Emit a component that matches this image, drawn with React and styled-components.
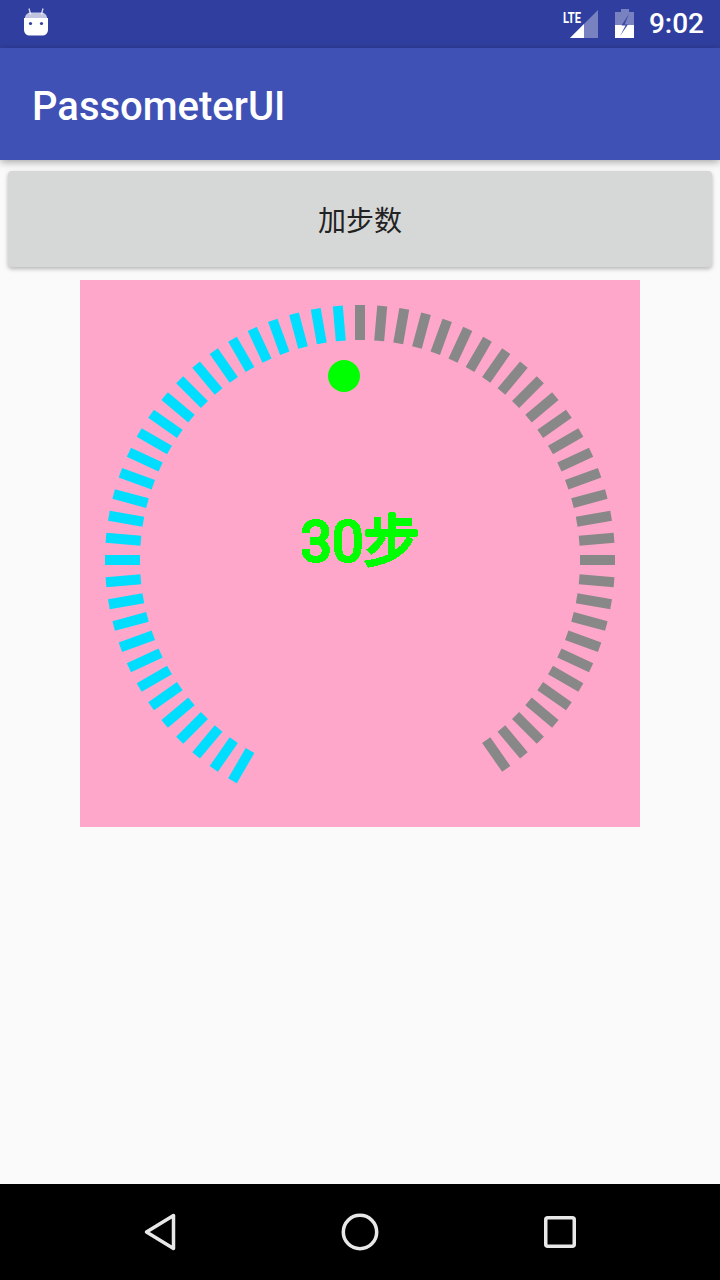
import React from 'react';
import styled, { createGlobalStyle } from 'styled-components';

const GlobalStyle = createGlobalStyle`
  html, body {
    margin: 0;
    padding: 0;
    background: #fafafa;
  }
`;

const Screen = styled.div`
  width: 720px;
  height: 1280px;
  display: flex;
  flex-direction: column;
  overflow: hidden;
  background: #fafafa;
  font-family: Roboto, "Noto Sans CJK SC", sans-serif;
`;

const StatusBar = styled.div`
  height: 48px;
  flex: none;
  display: flex;
  align-items: center;
  padding: 0 16px 0 24px;
  background: #303f9f;
  color: #fff;
`;

const RobotIcon = styled.svg`
  display: block;
  margin-bottom: 4px;
`;

const StatusIcons = styled.div`
  margin-left: auto;
  display: flex;
  align-items: center;
  gap: 15px;
`;

const Clock = styled.span`
  font-size: 28px;
  font-weight: 500;
  line-height: 48px;
`;

const AppBar = styled.header`
  height: 112px;
  flex: none;
  display: flex;
  align-items: center;
  padding: 5px 0 0 32px;
  box-sizing: border-box;
  background: #3f51b5;
  color: #fff;
  font-size: 40px;
  font-weight: 500;
  box-shadow: 0 2px 8px rgba(0, 0, 0, 0.35);
  position: relative;
`;

const Content = styled.main`
  flex: 1;
  display: flex;
  flex-direction: column;
  align-items: center;
`;

const AddButton = styled.button`
  width: 704px;
  height: 96px;
  margin-top: 11px;
  border: 0;
  border-radius: 4px;
  background: #d6d7d7;
  color: #222;
  font-family: inherit;
  font-size: 28px;
  box-shadow: 0 2px 4px rgba(0, 0, 0, 0.28);
`;

const GaugeBox = styled.div`
  width: 560px;
  height: 547px;
  margin-top: 13px;
  background: #ffa7ca;
`;

const GaugeSvg = styled.svg`
  display: block;
`;

const StepsText = styled.text`
  font-family: Roboto, "Noto Sans CJK SC", sans-serif;
  font-size: 56px;
  font-weight: 400;
  fill: #00ff00;
  stroke: #00ff00;
  stroke-width: 3px;
  text-anchor: middle;
  filter: url(#hard-edge);
`;

const NavBar = styled.nav`
  height: 96px;
  flex: none;
  display: flex;
  align-items: center;
  justify-content: center;
  gap: 144px;
  background: #000;
`;

const NavIcon = styled.svg`
  width: 56px;
  height: 56px;
  display: block;
  fill: none;
  stroke: #e8e8e8;
  stroke-width: 3.5;
  stroke-linejoin: round;
`;

const TICK_COLOR = { done: '#00ddff', todo: '#888888' };
const STEPS = 30;

// one tick every 5 degrees, -150 through 145, clockwise from 12 o'clock
const ticks = Array.from({ length: 60 }, (_, i) => ({
  angle: -150 + i * 5,
  done: i < STEPS,
}));

const Gauge = () => (
  <GaugeBox>
    <GaugeSvg width="560" height="547" viewBox="0 0 560 547">
      <defs>
        <filter id="hard-edge" x="-10%" y="-10%" width="120%" height="120%">
          <feComponentTransfer>
            <feFuncA type="discrete" tableValues="0 1" />
          </feComponentTransfer>
        </filter>
      </defs>
      {ticks.map((t) => (
        <rect
          key={t.angle}
          x="275"
          y="25"
          width="10"
          height="35"
          fill={t.done ? TICK_COLOR.done : TICK_COLOR.todo}
          transform={`rotate(${t.angle} 280 280)`}
        />
      ))}
      <circle cx="264" cy="96" r="16" fill="#00ff00" />
      <StepsText x="280" y="281">30步</StepsText>
    </GaugeSvg>
  </GaugeBox>
);

const AndroidIcon = () => (
  <RobotIcon width="24" height="28" viewBox="0 0 24 28">
    <path d="M5 0.5l1.6 6M19 0.5l-1.6 6" stroke="#fff" strokeWidth="1.4" opacity="0.75" />
    <path d="M1 10c0-3.5 3-5.5 6-5.5h10c3 0 6 2 6 5.5z" fill="#fff" opacity="0.7" />
    <path d="M0 10h24v12a5.5 5.5 0 0 1-5.5 5.5h-13A5.5 5.5 0 0 1 0 22z" fill="#fff" />
    <circle cx="6.5" cy="15.5" r="1.6" fill="#303f9f" />
    <circle cx="17.5" cy="15.5" r="1.6" fill="#303f9f" />
  </RobotIcon>
);

const LteIcon = () => (
  <svg width="38" height="30" viewBox="0 0 38 30">
    <path d="M37 1v28H9z" fill="#fff" opacity="0.35" />
    <path d="M23 15v14H9z" fill="#fff" />
    <text
      x="2"
      y="14"
      fill="#fff"
      fontFamily="Roboto, sans-serif"
      fontSize="15"
      fontWeight="700"
      textLength="18"
      lengthAdjust="spacingAndGlyphs"
    >
      LTE
    </text>
  </svg>
);

const BatteryIcon = () => (
  <svg width="20" height="30" viewBox="0 0 20 30">
    <path d="M7 0h8v3h5v26H1V3h6z" fill="#fff" opacity="0.35" />
    <path d="M1 16h19v13H1z" fill="#fff" />
    <path d="M15 5L7.5 16.5h4L6 27l8-11.5h-3.5z" fill="#303f9f" opacity="0.9" />
  </svg>
);

const App = () => (
  <Screen>
    <GlobalStyle />
    <StatusBar>
      <AndroidIcon />
      <StatusIcons>
        <LteIcon />
        <BatteryIcon />
        <Clock>9:02</Clock>
      </StatusIcons>
    </StatusBar>
    <AppBar>PassometerUI</AppBar>
    <Content>
      <AddButton>加步数</AddButton>
      <Gauge />
    </Content>
    <NavBar>
      <NavIcon viewBox="0 0 56 56">
        <path d="M41.5 11.5v33L14.5 28z" />
      </NavIcon>
      <NavIcon viewBox="0 0 56 56">
        <circle cx="28" cy="28" r="16.7" />
      </NavIcon>
      <NavIcon viewBox="0 0 56 56">
        <rect x="13.75" y="13.75" width="28.5" height="28.5" rx="2" />
      </NavIcon>
    </NavBar>
  </Screen>
);

export default App;
